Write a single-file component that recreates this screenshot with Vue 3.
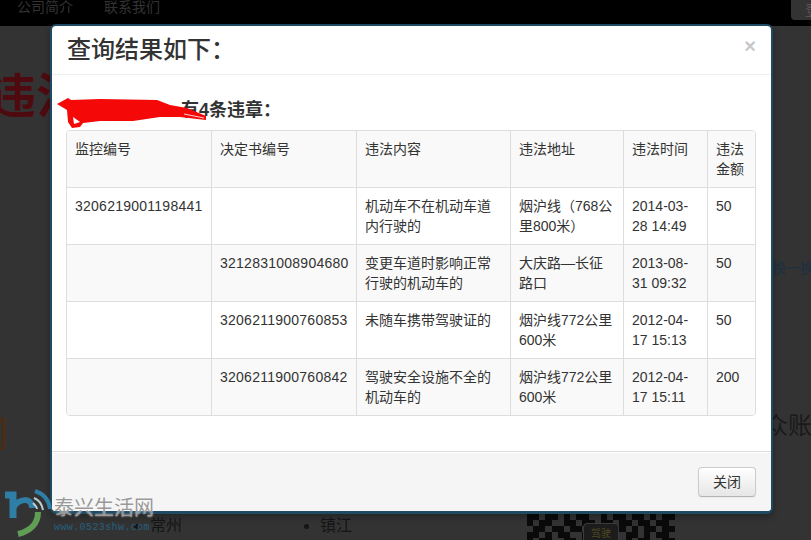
<script setup>
const columns = ['监控编号', '决定书编号', '违法内容', '违法地址', '违法时间', '违法金额']
const rows = [
  ['3206219001198441', '', '机动车不在机动车道内行驶的', '烟沪线（768公里800米）', '2014-03-28 14:49', '50'],
  ['', '3212831008904680', '变更车道时影响正常行驶的机动车的', '大庆路—长征路口', '2013-08-31 09:32', '50'],
  ['', '3206211900760853', '未随车携带驾驶证的', '烟沪线772公里600米', '2012-04-17 15:13', '50'],
  ['', '3206211900760842', '驾驶安全设施不全的机动车的', '烟沪线772公里600米', '2012-04-17 15:11', '200'],
]
const qrCells = [
  1,1,0,1,1,0,1,0,1,1,0,0,1,0,1,1,0,1,1,0,1,0,1,1,
  1,0,1,1,0,0,1,1,0,1,1,0,1,1,0,1,1,0,1,1,0,1,1,0,
  0,1,1,0,1,1,0,1,1,0,1,1,0,0,1,1,0,1,0,1,1,0,1,1,
  1,1,0,1,0,1,1,0,0,1,0,0,0,0,0,0,1,1,0,1,0,1,1,0,
  1,0,1,1,0,0,1,1,0,1,0,0,0,0,0,0,1,0,1,1,0,0,1,1,
]
</script>

<template>
  <div class="page">
    <header class="topbar">
      <nav class="nav">
        <span>公司简介</span>
        <span>联系我们</span>
      </nav>
      <span class="login">登</span>
    </header>

    <div class="behind">
      <div class="behind-left">
        <div class="big-title">违法</div>
        <div class="big-orange">间</div>
      </div>
      <div class="behind-right">
        <div class="swap">换一换</div>
        <div class="public">众账</div>
      </div>
    </div>

    <div class="behind-bottom">
      <ul class="city c1"><li>常州</li></ul>
      <ul class="city c2"><li>镇江</li></ul>
      <div class="qr">
        <i v-for="(c, i) in qrCells" :key="i" :class="{ on: c }"></i>
        <b class="qr-badge">驾驶</b>
      </div>
    </div>

    <section class="modal">
      <div class="modal-header">
        <h3>查询结果如下：</h3>
        <span class="close">×</span>
      </div>
      <div class="modal-body">
        <p class="summary">
          有4条违章：
          <svg class="scribble" width="152" height="34" viewBox="0 0 152 34">
            <path fill="#f40808" d="M1 8 L12 2 L15 4 L44 3 L101 4 L114 9 L131 12 L150 20 L150 24 L124 21 L104 21 L77 25 L44 25 L27 27 L24 31 L16 32 L12 26 L11 14 Z"/>
            <path fill="#fff" d="M17 21 L24 26 L18 28 Z"/>
            <path fill="none" stroke="#fff" stroke-width="0.8" d="M128 18 L148 22"/>
          </svg>
        </p>
        <div class="table-wrap">
          <table>
            <colgroup>
              <col class="c144" /><col class="c145" /><col class="c154" /><col class="c113" /><col class="c84" /><col />
            </colgroup>
            <thead>
              <tr><th v-for="c in columns" :key="c">{{ c }}</th></tr>
            </thead>
            <tbody>
              <tr v-for="(row, r) in rows" :key="r">
                <td v-for="(cell, i) in row" :key="i" :class="{ num: i < 2 }">{{ cell }}</td>
              </tr>
            </tbody>
          </table>
        </div>
      </div>
      <div class="modal-footer">
        <button type="button">关闭</button>
      </div>
    </section>

    <div class="watermark">
      <svg class="wm-logo" width="50" height="50" viewBox="0 0 50 50">
        <path d="M1 7 H9 V30" stroke="#2e7ea6" stroke-width="7" fill="none"/>
        <path d="M9 20 C15 10 28 9 28 20" stroke="#2e7ea6" stroke-width="6" fill="none"/>
        <path d="M34 24 C34 35 27 43 14 46" stroke="#5f9e54" stroke-width="6" fill="none"/>
        <path d="M31 3 C40 6 45 12 46 21" stroke="#2e7ea6" stroke-width="4" fill="none"/>
        <path d="M30 10 C35 12 38 16 39 22" stroke="#b9ced4" stroke-width="2" fill="none"/>
        <path d="M29 15 C31 17 33 19 33 21" stroke="#b9ced4" stroke-width="2" fill="none"/>
      </svg>
      <div class="wm-text">
        <div class="wm-name">泰兴生活网</div>
        <div class="wm-url">www.0523shw.com</div>
      </div>
    </div>
  </div>
</template>

<style scoped>
.page {
  position: relative;
  width: 811px;
  height: 540px;
  overflow: hidden;
  background: #333;
  font-family: "Liberation Sans", "Noto Sans CJK SC", sans-serif;
  font-size: 14px;
  line-height: 20px;
  color: #333;
}
.topbar {
  height: 26px;
  background: #000;
  display: flex;
  justify-content: space-between;
  align-items: flex-start;
}
.nav {
  display: flex;
  gap: 31px;
  padding-left: 17px;
  color: #333;
  line-height: 14px;
}
.login {
  width: 30px;
  height: 20px;
  background: #333;
  border-radius: 0 0 0 4px;
  color: #555;
  padding-left: 14px;
  box-sizing: border-box;
  margin-right: -10px;
}
.behind {
  display: flex;
  justify-content: space-between;
  height: 420px;
}
.big-title {
  font-size: 48px;
  font-weight: 700;
  line-height: 56px;
  color: #4f0a10;
  margin: 43px 0 0 -12px;
  white-space: nowrap;
  width: 62px;
  overflow: hidden;
}
.big-orange {
  font-size: 36px;
  line-height: 40px;
  color: #4c2c10;
  margin: 290px 0 0 -28px;
}
.behind-right {
  width: 39px;
  overflow: hidden;
  white-space: nowrap;
}
.swap {
  margin-top: 232px;
  color: #1c3040;
  line-height: 20px;
}
.public {
  margin-top: 134px;
  font-size: 24px;
  line-height: 28px;
  color: #1a1a1a;
  margin-left: -8px;
}
.behind-bottom {
  height: 94px;
  display: flex;
  color: #151515;
  font-size: 16px;
  padding-top: 70px;
  box-sizing: border-box;
}
.city {
  margin: 0;
  padding: 0;
  width: 28px;
  white-space: nowrap;
}
.c1 { margin-left: 150px; }
.c2 { margin-left: 142px; }
.qr {
  position: relative;
  margin: -2px 0 0 179px;
  flex: none;
  width: 148px;
  height: 30px;
  display: grid;
  grid-template-columns: repeat(24, 6.17px);
  grid-auto-rows: 6px;
}
.qr i { background: transparent; }
.qr i.on { background: #0a0a0a; }
.qr-badge {
  position: absolute;
  left: 56px;
  top: 9px;
  width: 36px;
  height: 24px;
  box-sizing: border-box;
  border-radius: 4px;
  border: 1px solid #3c3c3c;
  background: #1c1c1c;
  color: #4e4a20;
  font-size: 10px;
  line-height: 20px;
  text-align: center;
  font-weight: 400;
}
.modal {
  position: absolute;
  left: 50px;
  top: 24px;
  width: 723px;
  height: 490px;
  box-sizing: border-box;
  display: flex;
  flex-direction: column;
  background: #fff;
  border: 2px solid #1f4a63;
  border-bottom-width: 3px;
  border-radius: 6px;
  box-shadow: 0 3px 7px rgba(0, 0, 0, 0.3);
}
.modal-header {
  height: 48px;
  flex: none;
  border-bottom: 1px solid #eee;
  display: flex;
  justify-content: space-between;
  padding: 0 15px;
}
.modal-header h3 {
  margin: 0;
  font-size: 24px;
  line-height: 47px;
  font-weight: 500;
  color: #333;
}
.close {
  font-size: 20px;
  font-weight: 700;
  line-height: 40px;
  color: #c8c8c8;
}
.modal-body {
  flex: 1;
  padding: 24px 15px 0 14px;
}
.summary {
  position: relative;
  margin: 0;
  height: 31px;
  padding-left: 115px;
  box-sizing: border-box;
  font-size: 18px;
  font-weight: 700;
  line-height: 22px;
  white-space: nowrap;
}
.scribble {
  position: absolute;
  left: -10px;
  top: -3px;
}
.table-wrap {
  border: 1px solid #ddd;
  border-radius: 4px;
  overflow: hidden;
  width: 690px;
  box-sizing: border-box;
}
table {
  width: 100%;
  table-layout: fixed;
  border-collapse: separate;
  border-spacing: 0;
}
.c144 { width: 144px; }
.c145 { width: 145px; }
.c154 { width: 154px; }
.c113 { width: 113px; }
.c84 { width: 84px; }
th, td {
  padding: 8px;
  vertical-align: top;
  text-align: left;
  font-weight: 400;
  color: #333;
  border-left: 1px solid #ddd;
  border-top: 1px solid #ddd;
}
td.num { letter-spacing: 0.25px; }
th:first-child, td:first-child { border-left: 0; }
th { border-top: 0; background: #f9f9f9; }
tbody tr:nth-child(even) td { background: #f9f9f9; }
.modal-footer {
  height: 60px;
  flex: none;
  box-sizing: border-box;
  background: #f5f5f5;
  border-top: 1px solid #ddd;
  border-radius: 0 0 4px 4px;
  box-shadow: inset 0 1px 0 #fff;
  display: flex;
  justify-content: flex-end;
  align-items: flex-start;
  padding: 15px 15px 0;
}
button {
  width: 58px;
  height: 30px;
  border: 1px solid #ccc;
  border-bottom-color: #b3b3b3;
  border-radius: 4px;
  background: linear-gradient(#fff, #e6e6e6);
  box-shadow: inset 0 1px 0 rgba(255, 255, 255, 0.2), 0 1px 2px rgba(0, 0, 0, 0.05);
  font: inherit;
  color: #333;
  padding: 0;
}
.watermark {
  position: absolute;
  left: 4px;
  top: 488px;
  display: flex;
  align-items: flex-start;
}
.wm-logo { flex: none; }
.wm-text {
  margin: 9px 0 0 0;
}
.wm-name {
  font-size: 20px;
  line-height: 22px;
  color: #999;
  text-shadow: 0 0 2px rgba(255, 255, 255, 0.8);
}
.wm-url {
  font-family: "Liberation Mono", monospace;
  font-size: 10px;
  line-height: 14px;
  letter-spacing: 0.4px;
  color: #265f7d;
  margin-top: 2px;
}
</style>
